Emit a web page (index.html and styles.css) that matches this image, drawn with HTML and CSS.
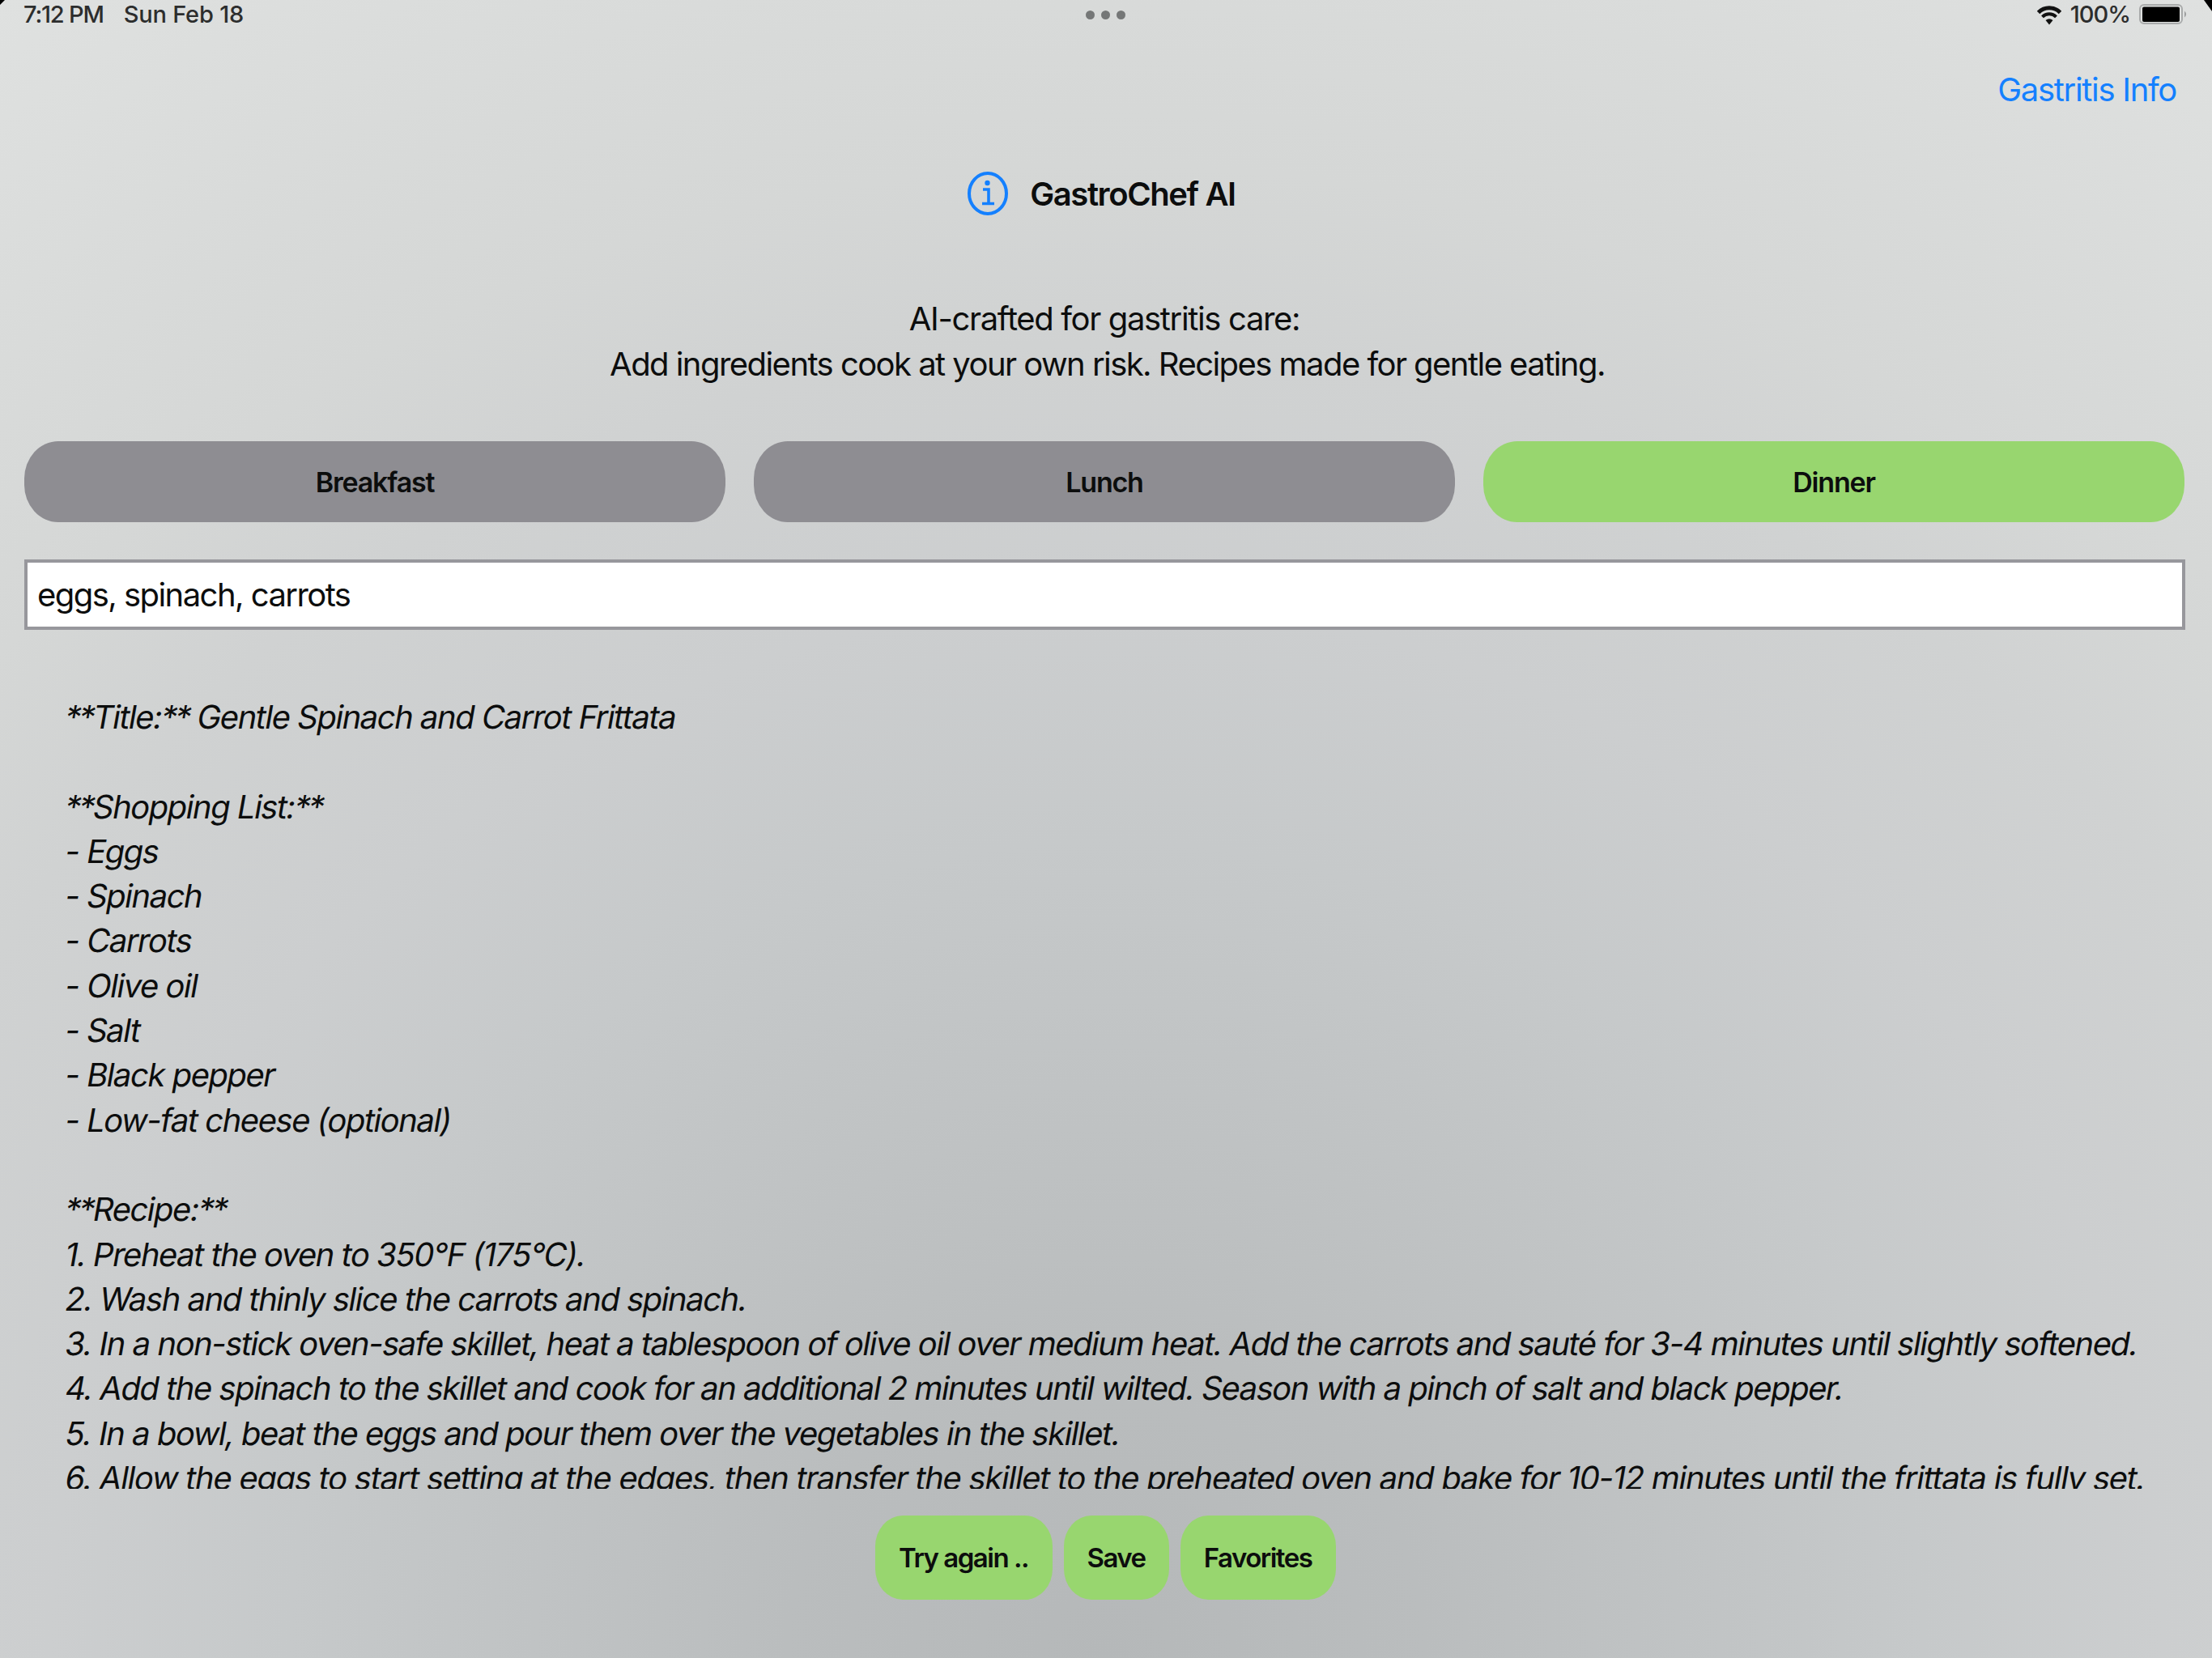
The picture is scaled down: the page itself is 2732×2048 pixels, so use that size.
FILE: index.html
```html
<!DOCTYPE html>
<html lang="en">
<head>
  <meta charset="UTF-8" />
  <meta name="viewport" content="width=device-width, initial-scale=1.0"/>
  <title>GastroChef AI</title>
  <link rel="stylesheet" href="styles.css">
</head>
<body>
  <div class="corner corner-left"></div>
  <div class="corner corner-right"></div>

  <!-- Status bar -->
  <header class="status-bar">
    <div class="status-left">
      <span class="time">7:12 PM</span>
      <span class="date">Sun Feb 18</span>
    </div>
    <div class="dots"><i></i><i></i><i></i></div>
    <div class="status-right">
      <svg class="wifi" viewBox="0 0 30 25">
        <path d="M1.5 9.5 A19 19 0 0 1 28.5 9.5" fill="none" stroke="#111" stroke-width="5"/>
        <path d="M6.5 14.8 A12 12 0 0 1 23.5 14.8" fill="none" stroke="#111" stroke-width="4"/>
        <path d="M15 24.5 L10.5 19 Q15 15.5 19.5 19 Z" fill="#111"/>
      </svg>
      <span class="percent">100%</span>
      <svg class="battery" viewBox="0 0 60 26">
        <rect x="1" y="1" width="52" height="23" rx="5" fill="none" stroke="#a9abab" stroke-width="2"/>
        <rect x="4" y="3.5" width="46" height="18.5" rx="2" fill="#000"/>
        <path d="M56 8.5 Q60 12.5 56 16.5 Z" fill="#9c9e9e"/>
      </svg>
    </div>
  </header>

  <nav class="top-nav">
    <a href="#">Gastritis Info</a>
  </nav>

  <div class="title-row">
    <svg class="info-icon" viewBox="0 0 50 54">
      <ellipse cx="25" cy="27" rx="23" ry="25" fill="none" stroke="#1480ff" stroke-width="4"/>
      <circle cx="24.5" cy="14" r="3.2" fill="#1480ff"/>
      <path d="M19 22 H26 V39 M18 39.5 H33" fill="none" stroke="#1480ff" stroke-width="3.6"/>
    </svg>
    <h1>GastroChef AI</h1>
  </div>

  <div class="intro">
    <p class="tagline">AI-crafted for gastritis care:</p>
    <p>Add ingredients cook at your own risk. Recipes made for gentle eating.</p>
  </div>

  <div class="meals">
    <button>Breakfast</button>
    <button>Lunch</button>
    <button class="active">Dinner</button>
  </div>

  <input class="ingredients" type="text" value="eggs, spinach, carrots">

  <div class="recipe">
    <p><span class="stars">**</span>Title:<span class="stars">**</span> Gentle Spinach and Carrot Frittata</p>
    <br>
    <p><span class="stars">**</span>Shopping List:<span class="stars">**</span></p>
    <p>- Eggs</p>
    <p>- Spinach</p>
    <p>- Carrots</p>
    <p>- Olive oil</p>
    <p>- Salt</p>
    <p>- Black pepper</p>
    <p>- Low-fat cheese (optional)</p>
    <br>
    <p><span class="stars">**</span>Recipe:<span class="stars">**</span></p>
    <p>1. Preheat the oven to 350°F (175°C).</p>
    <p>2. Wash and thinly slice the carrots and spinach.</p>
    <p>3. In a non-stick oven-safe skillet, heat a tablespoon of olive oil over medium heat. Add the carrots and sauté for 3-4 minutes until slightly softened.</p>
    <p>4. Add the spinach to the skillet and cook for an additional 2 minutes until wilted. Season with a pinch of salt and black pepper.</p>
    <p>5. In a bowl, beat the eggs and pour them over the vegetables in the skillet.</p>
    <p class="last-step">6. Allow the eggs to start setting at the edges, then transfer the skillet to the preheated oven and bake for 10-12 minutes until the frittata is fully set.</p>
  </div>

  <div class="actions">
    <button class="try-btn">Try again ..</button>
    <button class="save-btn">Save</button>
    <button class="fav-btn">Favorites</button>
  </div>
</body>
</html>
```

FILE: styles.css
```css
* {
  box-sizing: border-box;
}
body {
  margin: 0;
  width: 2732px;
  height: 2048px;
  overflow: hidden;
  font-family: Inter, "Liberation Sans", sans-serif;
  color: #0c0d0d;
  background: radial-gradient(circle 2460px at 50% 100%, #b5b8b9 0%, #babdbe 16%, #c2c5c6 33%, #c6c9ca 41%, #cccecf 53%, #d0d2d2 66%, #d5d7d6 75%, #d8dad9 83%, #dfe1e0 100%);
}
button, input {
  font-family: inherit;
  color: #0c0d0d;
}

/* screen corners */
.corner {
  position: absolute;
  top: 0;
  background: #000;
}
.corner-left {
  left: 0;
  width: 6px;
  height: 6px;
  clip-path: polygon(0 0, 100% 0, 0 100%);
}
.corner-right {
  right: 0;
  width: 10px;
  height: 14px;
  clip-path: polygon(0 0, 100% 0, 100% 100%);
}

.status-bar {
  height: 36px;
  padding: 0 30px 0 29px;
  display: grid;
  grid-template-columns: 1fr auto 1fr;
  align-items: center;
  font-size: 29px;
  font-weight: 500;
  line-height: 36px;
  color: #2c2d2d;
}
.status-left {
  display: flex;
  gap: 25px;
}
.time {
  letter-spacing: -1.2px;
}
.date {
  letter-spacing: -0.2px;
}
.dots {
  display: flex;
  gap: 8px;
}
.dots i {
  width: 11px;
  height: 11px;
  border-radius: 50%;
  background: #757777;
}
.status-right {
  display: flex;
  justify-content: flex-end;
  align-items: center;
}
.percent {
  margin: 0 11px 0 11px;
  letter-spacing: -1px;
}
.wifi {
  width: 30px;
  height: 25px;
}
.battery {
  width: 60px;
  height: 26px;
}

.top-nav {
  display: flex;
  justify-content: flex-end;
  height: 150px;
  padding: 51px 44px 0 0;
}
.top-nav a {
  font-size: 40px;
  line-height: 48px;
  letter-spacing: -1.3px;
  color: #1480ff;
  text-decoration: none;
}

.title-row {
  display: flex;
  justify-content: center;
  align-items: center;
  gap: 27px;
  height: 106px;
  padding-right: 11px;
}
.title-row h1 {
  margin: 0;
  font-size: 40px;
  font-weight: 600;
  letter-spacing: -1.4px;
}
.info-icon {
  width: 50px;
  height: 54px;
}

.intro {
  height: 112px;
  margin: 74px 0 67px;
  text-align: center;
  font-size: 40px;
  line-height: 56px;
  letter-spacing: -1.55px;
}
.intro p {
  margin: 0;
  padding-left: 3px;
}
.intro .tagline {
  padding: 0 4px 0 0;
  letter-spacing: -1.35px;
}

.meals {
  display: grid;
  grid-template-columns: repeat(3, 1fr);
  gap: 35px;
  padding: 0 34px 0 30px;
}
.meals button {
  height: 100px;
  border: none;
  border-radius: 42px / 46px;
  background: #8e8d92;
  font-size: 34px;
  font-weight: 600;
  letter-spacing: -1.2px;
}
.meals button.active {
  background: #98d66f;
}

.ingredients {
  display: block;
  width: 2669px;
  height: 87px;
  margin: 46px 0 0 30px;
  padding: 0 12px;
  border: 4px solid #97979c;
  border-radius: 0;
  background: #fff;
  font-size: 40px;
  letter-spacing: -1.55px;
}

.recipe {
  height: 981px;
  margin-top: 80px;
  padding-left: 81px;
  overflow: hidden;
  white-space: nowrap;
  font-size: 40px;
  line-height: 55.3px;
  letter-spacing: -1.48px;
}
.recipe p {
  margin: 0;
  transform: skewX(-10deg);
}
.recipe .stars {
  letter-spacing: -2.8px;
}
.recipe .last-step {
  letter-spacing: -1.29px;
}

.actions {
  display: flex;
  justify-content: center;
  gap: 14px;
  margin-top: 33px;
  padding-right: 2px;
}
.actions button {
  height: 104px;
  padding: 0;
  border: none;
  border-radius: 34px / 38px;
  background: #98d66f;
  font-size: 33px;
  font-weight: 600;
  letter-spacing: -1.5px;
}
.actions .try-btn {
  width: 219px;
}
.actions .save-btn {
  width: 130px;
}
.actions .fav-btn {
  width: 192px;
}
```
